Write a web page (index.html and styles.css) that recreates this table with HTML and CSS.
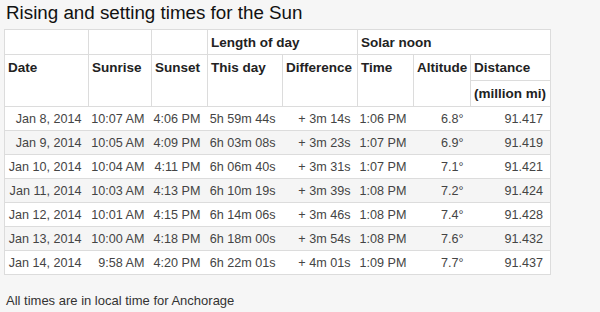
FILE: index.html
```html
<!DOCTYPE html>
<html>
<head>
<meta charset="utf-8">
<link rel="stylesheet" href="styles.css">
</head>
<body>
<h1 class="title">Rising and setting times for the Sun</h1>
<table class="sun">
  <colgroup>
    <col class="c-date"><col class="c-rise"><col class="c-set"><col class="c-len">
    <col class="c-diff"><col class="c-time"><col class="c-alt"><col class="c-dist">
  </colgroup>
  <thead>
    <tr class="h1">
      <th></th><th></th><th></th>
      <th colspan="2">Length of day</th>
      <th colspan="3">Solar noon</th>
    </tr>
    <tr class="h2">
      <th rowspan="2">Date</th>
      <th rowspan="2">Sunrise</th>
      <th rowspan="2">Sunset</th>
      <th rowspan="2">This day</th>
      <th rowspan="2">Difference</th>
      <th rowspan="2">Time</th>
      <th rowspan="2">Altitude</th>
      <th>Distance</th>
    </tr>
    <tr class="h3">
      <th>(million mi)</th>
    </tr>
  </thead>
  <tbody>
    <tr><td>Jan 8, 2014</td><td>10:07 AM</td><td>4:06 PM</td><td>5h 59m 44s</td><td>+ 3m 14s</td><td>1:06 PM</td><td>6.8°</td><td>91.417</td></tr>
    <tr><td>Jan 9, 2014</td><td>10:05 AM</td><td>4:09 PM</td><td>6h 03m 08s</td><td>+ 3m 23s</td><td>1:07 PM</td><td>6.9°</td><td>91.419</td></tr>
    <tr><td>Jan 10, 2014</td><td>10:04 AM</td><td>4:11 PM</td><td>6h 06m 40s</td><td>+ 3m 31s</td><td>1:07 PM</td><td>7.1°</td><td>91.421</td></tr>
    <tr><td>Jan 11, 2014</td><td>10:03 AM</td><td>4:13 PM</td><td>6h 10m 19s</td><td>+ 3m 39s</td><td>1:08 PM</td><td>7.2°</td><td>91.424</td></tr>
    <tr><td>Jan 12, 2014</td><td>10:01 AM</td><td>4:15 PM</td><td>6h 14m 06s</td><td>+ 3m 46s</td><td>1:08 PM</td><td>7.4°</td><td>91.428</td></tr>
    <tr><td>Jan 13, 2014</td><td>10:00 AM</td><td>4:18 PM</td><td>6h 18m 00s</td><td>+ 3m 54s</td><td>1:08 PM</td><td>7.6°</td><td>91.432</td></tr>
    <tr><td>Jan 14, 2014</td><td>9:58 AM</td><td>4:20 PM</td><td>6h 22m 01s</td><td>+ 4m 01s</td><td>1:09 PM</td><td>7.7°</td><td>91.437</td></tr>
  </tbody>
</table>
<p class="note">All times are in local time for Anchorage</p>
</body>
</html>
```
FILE: styles.css
```css
html, body {
  margin: 0;
  padding: 0;
  background: #f6f6f6;
}
body {
  padding: 0 0 0 4px;
  font-family: "Liberation Sans", Arial, sans-serif;
  color: #333;
}
.title {
  margin: 2px 0 5px 2px;
  font-size: 18.8px;
  line-height: 22px;
  font-weight: normal;
  color: #111;
}
.sun {
  border-collapse: collapse;
  table-layout: fixed;
  width: 546px;
  background: #fff;
  border: 1px solid #dcdcdc;
}
.c-date { width: 84px; }
.c-rise { width: 63px; }
.c-set { width: 56px; }
.c-len { width: 75px; }
.c-diff { width: 75px; }
.c-time { width: 56px; }
.c-alt { width: 57px; }
.c-dist { width: 80px; }
.sun th {
  border: 1px solid #dcdcdc;
  text-align: left;
  vertical-align: top;
  padding: 4px 2px 0 3px;
  font-size: 13.5px;
  line-height: 17px;
  font-weight: bold;
  color: #222;
  white-space: nowrap;
  background: #fff;
}
.sun .h1 th { height: 20px; }
.sun .h2 th { height: 21px; }
.sun .h3 th { height: 21px; }
.sun td {
  border-top: 1px solid #dcdcdc;
  text-align: right;
  padding: 0 7px 0 0;
  height: 23px;
  font-size: 12.6px;
  color: #444;
  white-space: nowrap;
  vertical-align: middle;
}
.sun tbody tr:nth-child(even) td {
  background: #f5f5f5;
}
.note {
  margin: 18px 0 0 2px;
  font-size: 13px;
  line-height: 16px;
  color: #333;
}
```
